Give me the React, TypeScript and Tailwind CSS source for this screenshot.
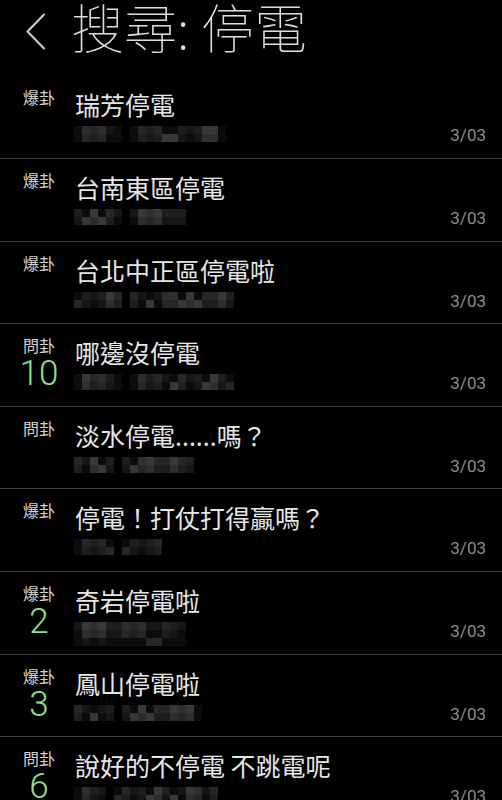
import * as React from 'react';

interface IPost {
  tag: string;
  count?: number;
  title: string;
  date: string;
  blur: number[];
  tall?: boolean;
}

const posts: IPost[] = [
  { tag: '爆卦', title: '瑞芳停電', date: '3/03', blur: [6, 12] },
  { tag: '爆卦', title: '台南東區停電', date: '3/03', blur: [6, 7] },
  { tag: '爆卦', title: '台北中正區停電啦', date: '3/03', blur: [6, 13] },
  { tag: '問卦', count: 10, title: '哪邊沒停電', date: '3/03', blur: [6, 13] },
  { tag: '問卦', title: '淡水停電......嗎？', date: '3/03', blur: [5, 9] },
  { tag: '爆卦', title: '停電！打仗打得贏嗎？', date: '3/03', blur: [5, 5] },
  { tag: '爆卦', count: 2, title: '奇岩停電啦', date: '3/03', blur: [14], tall: true },
  { tag: '爆卦', count: 3, title: '鳳山停電啦', date: '3/03', blur: [5, 10] },
  { tag: '問卦', count: 6, title: '說好的不停電 不跳電呢', date: '3/03', blur: [4, 13] },
];

const shades = [
  'bg-[#0c0c0c]',
  'bg-[#161616]',
  'bg-[#1e1e1e]',
  'bg-[#262626]',
  'bg-[#2e2e2e]',
  'bg-[#383838]',
];

// pixelated author name, drawn as a grid of grey cells
const Mosaic: React.FunctionComponent<{ blocks: number[]; seed: number; tall?: boolean }> = ({
  blocks,
  seed,
  tall,
}) => {
  const rows = tall ? 3 : 2;
  return (
    <div className="flex gap-[8px] ml-[-1px]">
      {blocks.map((cols, b) => (
        <div key={b} className="flex flex-col">
          {Array.from({ length: rows }).map((_, r) => (
            <div key={r} className="flex">
              {Array.from({ length: cols }).map((__, c) => {
                let v = (seed * 37 + b * 11 + r * 23 + c * 7 + ((c * c + seed) % 5)) % 6;
                if (c === 0 || c === cols - 1) v = Math.max(0, v - 2);
                if (tall && r === rows - 1) v = Math.max(0, v - 2);
                return <div key={c} className={`w-[8px] h-[8px] ${shades[v]}`} />;
              })}
            </div>
          ))}
        </div>
      ))}
    </div>
  );
};

const Row: React.FunctionComponent<{ post: IPost; index: number }> = ({ post, index }) => {
  return (
    <div className="flex h-[82.6px] border-b border-[#3a3a3c] shrink-0">
      <div className="flex flex-col items-center w-[34px] ml-[22px] pt-[11px]">
        <div className="text-[16px] leading-[20px] text-[#d2d2d2] font-['Noto_Sans_CJK_TC',sans-serif]">
          {post.tag}
        </div>
        {post.count !== undefined && (
          <div className="mt-[4px] text-[35px] leading-[30px] font-light text-[#8fe08c] font-['Roboto','Liberation_Sans',sans-serif]">
            {post.count}
          </div>
        )}
      </div>
      <div className="flex-1 ml-[19px] pt-[13px] min-w-0">
        <div className="text-[25px] leading-[30px] text-[#e6e6e6] whitespace-nowrap font-['Noto_Sans_CJK_TC',sans-serif]">
          {post.title}
        </div>
        <div className="mt-[7px]">
          <Mosaic blocks={post.blur} seed={index + 1} tall={post.tall} />
        </div>
      </div>
      <div className="pt-[49px] pr-[16px] text-[17px] leading-[20px] text-[#8c8c8c] font-['Roboto','Liberation_Sans',sans-serif]">
        {post.date}
      </div>
    </div>
  );
};

export default function App() {
  return (
    <div className="w-[502px] h-[800px] overflow-hidden bg-black flex flex-col">
      <div className="flex items-start h-[76.4px] shrink-0">
        <svg className="mt-[13px] ml-[25px]" width="22" height="37" viewBox="0 0 22 37" fill="none">
          <path d="M19 1.5 L2.5 18.5 L19 35.5" stroke="#cfcfcf" strokeWidth="2" strokeLinecap="round" strokeLinejoin="round" />
        </svg>
        <div className="ml-[24px] text-[53px] leading-[60px] mt-[-4px] font-thin text-[#dedede] whitespace-nowrap font-['Noto_Sans_CJK_TC',sans-serif]">
          搜尋: 停電
        </div>
      </div>
      {posts.map((post, index) => (
        <Row key={index} post={post} index={index} />
      ))}
    </div>
  );
}
